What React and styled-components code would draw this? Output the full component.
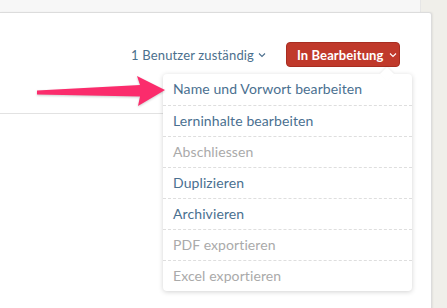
import React from 'react';
import styled, { createGlobalStyle } from 'styled-components';

const GlobalStyle = createGlobalStyle`
html, body {
  margin: 0;
  padding: 0;
  height: 100%;
  background: #f0efea;
  font-family: Lato, "Open Sans", Arial, sans-serif;
}
#root { height: 100%; }
`;

const Page = styled.div`
width: 447px;
height: 308px;
overflow: hidden;
position: relative;
`;

const TopStrip = styled.div`
width: 420px;
height: 12px;
background: #f7f7f7;
border-right: 1px solid #e6e6e6;
`;

const Card = styled.div`
position: relative;
width: 432px;
height: 300px;
background: #fff;
border: 1px solid #dcdcdc;
border-left: none;
border-top-right-radius: 3px;
box-shadow: 1px 0 2px rgba(0,0,0,0.06);
box-sizing: border-box;
`;

const Header = styled.div`
display: flex;
justify-content: flex-end;
align-items: center;
gap: 20px;
padding: 29px 31px 0 0;
`;

const Assignee = styled.span`
font-size: 13px;
letter-spacing: 0.15px;
color: #4b6f8d;
display: flex;
align-items: center;
gap: 4px;
padding-top: 1px;
`;

const StatusWrap = styled.div`
position: relative;
`;

const StatusButton = styled.button`
display: flex;
align-items: center;
gap: 5px;
height: 25px;
width: 114px;
padding: 0 0 0 10px;
box-sizing: border-box;
background: #c0392b;
border: 1px solid #a82d21;
border-radius: 4px;
color: #fff;
font-family: Lato, "Open Sans", Arial, sans-serif;
font-size: 13px;
font-weight: 700;
letter-spacing: 0.1px;
cursor: pointer;
&:focus { outline: none; }
`;

const Divider = styled.div`
margin-top: 46px;
margin-right: 200px;
height: 1px;
background: #e2e2e2;
`;

const Menu = styled.ul`
position: absolute;
top: 32px;
left: -123px;
width: 249px;
margin: 0;
padding: 0;
list-style: none;
background: #fff;
border-radius: 4px;
box-shadow: 0 1px 5px rgba(0,0,0,0.18);
z-index: 2;
&::before {
  content: '';
  position: absolute;
  top: -5px;
  left: 219px;
  width: 10px;
  height: 10px;
  background: #fff;
  transform: rotate(45deg);
  box-shadow: -1px -1px 2px rgba(0,0,0,0.06);
}
`;

const MenuItem = styled.li`
position: relative;
height: 31px;
line-height: 30px;
padding-left: 10px;
font-size: 14px;
letter-spacing: 0.1px;
color: ${(p) => (p.disabled ? '#aaaaaa' : '#4a7090')};
border-top: ${(p) => (p.first ? 'none' : '1px dashed #dedede')};
box-sizing: border-box;
`;

const Pointer = styled.svg`
position: absolute;
left: 34px;
top: 62px;
z-index: 3;
filter: drop-shadow(0 1px 1px rgba(0,0,0,0.2));
`;

const Chevron = ({ color }) => (
  <svg width="8" height="6" viewBox="0 0 8 6">
    <path d="M1 1.5 L4 4.5 L7 1.5" fill="none" stroke={color} strokeWidth="1.1" />
  </svg>
);

const items = [
  { label: 'Name und Vorwort bearbeiten' },
  { label: 'Lerninhalte bearbeiten' },
  { label: 'Abschliessen', disabled: true },
  { label: 'Duplizieren' },
  { label: 'Archivieren' },
  { label: 'PDF exportieren', disabled: true },
  { label: 'Excel exportieren', disabled: true },
];

export default function App() {
  return (
    <Page>
      <GlobalStyle />
      <TopStrip />
      <Card>
        <Header>
          <Assignee>
            1 Benutzer zuständig
            <Chevron color="#4b6f8d" />
          </Assignee>
          <StatusWrap>
            <StatusButton>
              In Bearbeitung
              <Chevron color="#fff" />
            </StatusButton>
            <Menu>
              {items.map((it, i) => (
                <MenuItem key={it.label} first={i === 0} disabled={it.disabled}>
                  {it.label}
                </MenuItem>
              ))}
            </Menu>
          </StatusWrap>
        </Header>
        <Divider />
        <Pointer width="135" height="36" viewBox="0 0 135 36">
          <path
            d="M3 15.5 L106 10 L103 1 L131 15 L104 31 L106 21.5 L3 19.5 Z"
            fill="#fb2c6c"
          />
        </Pointer>
      </Card>
    </Page>
  );
}
